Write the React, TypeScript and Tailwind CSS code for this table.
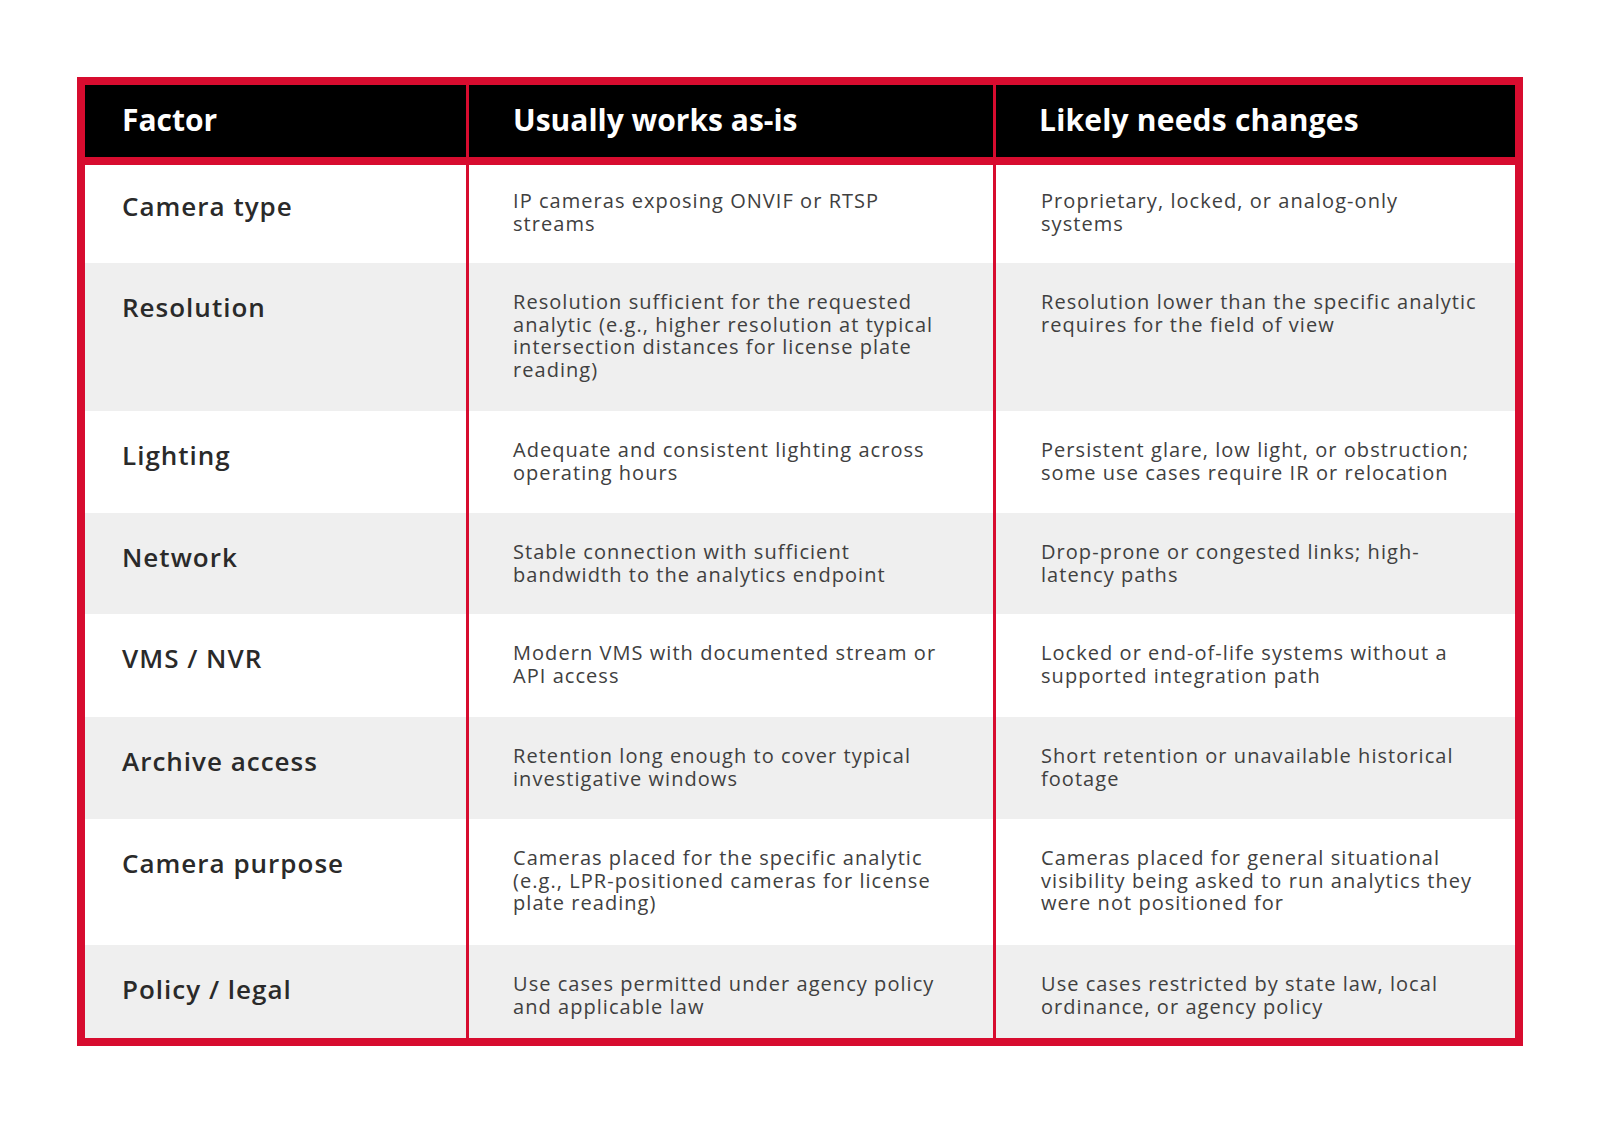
const rows = [
  {
    factor: "Camera type",
    works: "IP cameras exposing ONVIF or RTSP streams",
    changes: "Proprietary, locked, or analog-only systems",
    h: "h-[98px]",
    pt: "pt-[25px]",
    bg: "bg-white",
  },
  {
    factor: "Resolution",
    works:
      "Resolution sufficient for the requested analytic (e.g., higher resolution at typical intersection distances for license plate reading)",
    changes: "Resolution lower than the specific analytic requires for the field of view",
    h: "h-[148px]",
    pt: "pt-[28px]",
    bg: "bg-[#efefef]",
  },
  {
    factor: "Lighting",
    works: "Adequate and consistent lighting across operating hours",
    changes: "Persistent glare, low light, or obstruction; some use cases require IR or relocation",
    h: "h-[102px]",
    pt: "pt-[28px]",
    bg: "bg-white",
  },
  {
    factor: "Network",
    works: "Stable connection with sufficient bandwidth to the analytics endpoint",
    changes: "Drop-prone or congested links; high-latency paths",
    h: "h-[101px]",
    pt: "pt-[28px]",
    bg: "bg-[#efefef]",
  },
  {
    factor: "VMS / NVR",
    works: "Modern VMS with documented stream or API access",
    changes: "Locked or end-of-life systems without a supported integration path",
    h: "h-[103px]",
    pt: "pt-[28px]",
    bg: "bg-white",
  },
  {
    factor: "Archive access",
    works: "Retention long enough to cover typical investigative windows",
    changes: "Short retention or unavailable historical footage",
    h: "h-[102px]",
    pt: "pt-[28px]",
    bg: "bg-[#efefef]",
  },
  {
    factor: "Camera purpose",
    works:
      "Cameras placed for the specific analytic (e.g., LPR-positioned cameras for license plate reading)",
    changes:
      "Cameras placed for general situational visibility being asked to run analytics they were not positioned for",
    h: "h-[126px]",
    pt: "pt-[28px]",
    bg: "bg-white",
  },
  {
    factor: "Policy / legal",
    works: "Use cases permitted under agency policy and applicable law",
    changes: "Use cases restricted by state law, local ordinance, or agency policy",
    h: "h-[93px]",
    pt: "pt-[28px]",
    bg: "bg-[#efefef]",
  },
];

export default function App() {
  return (
    <div className="min-h-[1124px] bg-white pt-[77px] font-['Open_Sans',sans-serif]">
      <div className="mx-auto w-[1446px] border-8 border-[#d70c2f]">
        {/* header */}
        <div className="grid h-[80px] grid-cols-[384px_527px_1fr] border-b-8 border-[#d70c2f] bg-black text-[30px] font-bold text-white">
          <div className="flex items-center border-r-[3px] border-[#d70c2f] pb-[3px] pl-[37px]">Factor</div>
          <div className="flex items-center border-r-[3px] border-[#d70c2f] pb-[3px] pl-[44px]">Usually works as-is</div>
          <div className="flex items-center pb-[3px] pl-[43px] tracking-[0.2px]">Likely needs changes</div>
        </div>

        {/* body rows */}
        {rows.map((row) => (
          <div key={row.factor} className={`grid grid-cols-[384px_527px_1fr] ${row.h} ${row.bg}`}>
            <div className={`border-r-[3px] border-[#d70c2f] pl-[37px] ${row.pt} text-[26px] leading-[32px] font-semibold tracking-[1px] text-[#2a2a2a]`}>
              {row.factor}
            </div>
            <div className={`border-r-[3px] border-[#d70c2f] pl-[44px] pr-[45px] ${row.pt} text-[20px] leading-[22.5px] tracking-[1.05px] text-[#404040]`}>
              {row.works}
            </div>
            <div className={`pl-[45px] pr-[36px] ${row.pt} text-[20px] leading-[22.5px] tracking-[1.05px] text-[#404040]`}>
              {row.changes}
            </div>
          </div>
        ))}
      </div>
    </div>
  );
}
